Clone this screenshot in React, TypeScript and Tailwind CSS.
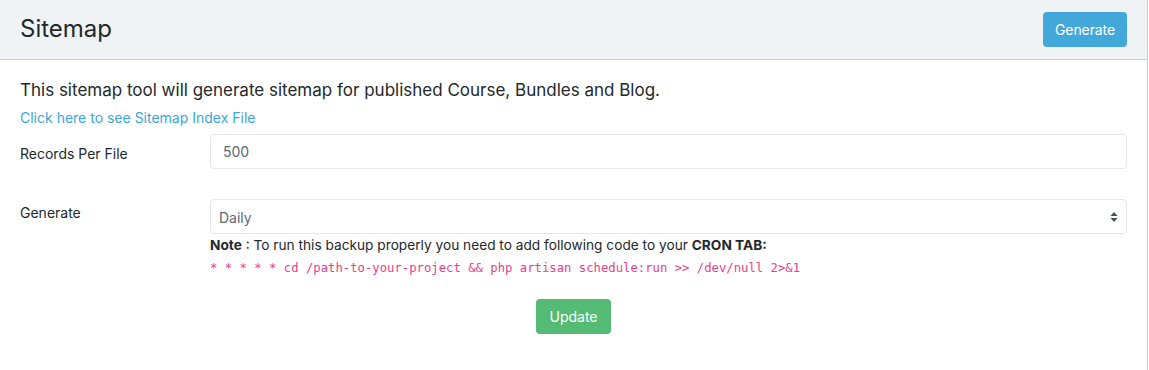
export default function App() {
  return (
    <div className="min-h-screen bg-white" style={{ fontFamily: 'Inter, "Liberation Sans", Arial, sans-serif' }}>
      <div className="w-[1148px] border-r border-[#c8ced3] min-h-[372px]">
        {/* Header */}
        <div className="h-[60px] bg-[#f0f3f5] border-b border-[#c8ced3] flex items-center justify-between pl-5 pr-5">
          <h1 className="text-[24px] text-[#23282c] leading-none -mt-[1px]">Sitemap</h1>
          <button className="bg-[#42a8da] text-white text-[14px] px-[12px] h-[35px] rounded-[4px] -mt-[1px] tracking-[-0.1px]">
            Generate
          </button>
        </div>

        {/* Body */}
        <div className="px-5 pt-[20px]">
          <p className="text-[17px] text-[#23282c] leading-[21px]">
            This sitemap tool will generate sitemap for published Course, Bundles and Blog.
          </p>
          <a className="block text-[14px] text-[#3aa7db] mt-[9px] leading-[16px]">
            Click here to see Sitemap Index File
          </a>

          <div className="flex mt-[8px]">
            <label className="w-[190px] text-[14px] text-[#23282c] pt-[9px]">Records Per File</label>
            <div className="flex-1">
              <div className="h-[35px] border border-[#e4e7ea] rounded-[4px] flex items-center px-[12px] text-[14px] text-[#5c6873]">
                500
              </div>
            </div>
          </div>

          <div className="flex mt-[30px]">
            <label className="w-[190px] text-[14px] text-[#23282c] pt-[3px]">Generate</label>
            <div className="flex-1">
              <div className="h-[35px] border border-[#e4e7ea] rounded-[4px] flex items-center justify-between pl-[8px] pr-[8px] text-[14px] text-[#5c6873]">
                <span className="pt-[1px]">Daily</span>
                <svg width="8" height="12" viewBox="0 0 8 12">
                  <path d="M4 1 L7.5 5 L0.5 5 Z" fill="#4a4f54" />
                  <path d="M4 11 L7.5 7 L0.5 7 Z" fill="#4a4f54" />
                </svg>
              </div>
              <p className="text-[13.7px] text-[#23282c] mt-[3px] leading-[17px]">
                <b>Note</b> : To run this backup properly you need to add following code to your <b>CRON TAB:</b>
              </p>
              <code
                className="block text-[12.25px] text-[#e83e8c] mt-[7px] leading-[14px]"
                style={{ fontFamily: '"DejaVu Sans Mono", "Liberation Mono", monospace' }}
              >
                * * * * * cd /path-to-your-project &amp;&amp; php artisan schedule:run &gt;&gt; /dev/null 2&gt;&amp;1
              </code>
            </div>
          </div>

          <div className="flex justify-center mt-[24px]">
            <button className="bg-[#53bb74] text-white text-[14px] px-[13px] h-[35px] rounded-[4px]">Update</button>
          </div>
        </div>
      </div>
    </div>
  );
}
